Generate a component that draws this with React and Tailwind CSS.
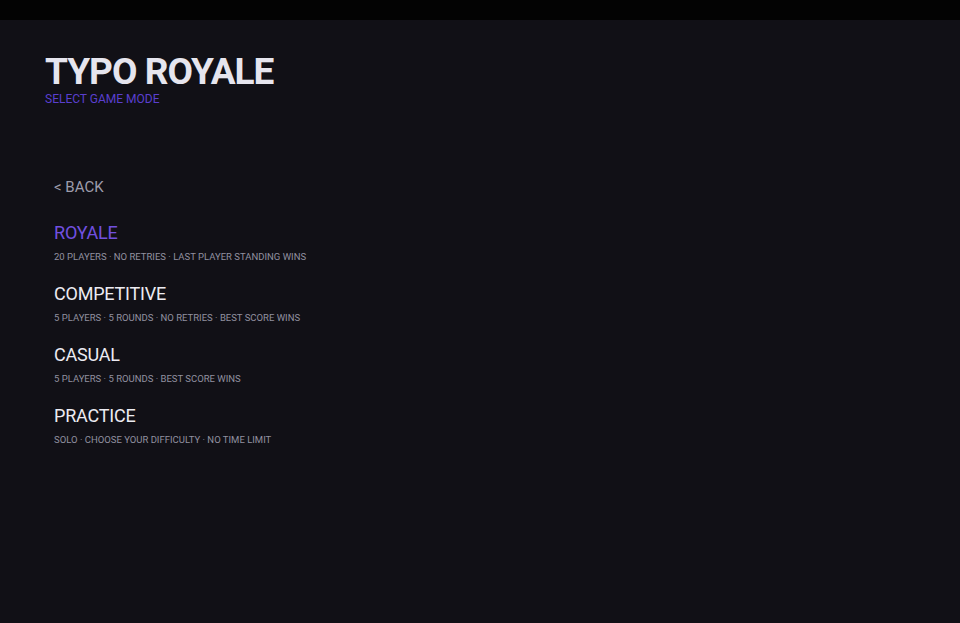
import React from "react";

const modes = [
  { name: "ROYALE", desc: "20 PLAYERS · NO RETRIES · LAST PLAYER STANDING WINS", active: true },
  { name: "COMPETITIVE", desc: "5 PLAYERS · 5 ROUNDS · NO RETRIES · BEST SCORE WINS" },
  { name: "CASUAL", desc: "5 PLAYERS · 5 ROUNDS · BEST SCORE WINS" },
  { name: "PRACTICE", desc: "SOLO · CHOOSE YOUR DIFFICULTY · NO TIME LIMIT" },
];

const App = () => {
  return (
    <div
      className="w-full h-[623px] bg-[#111016] flex flex-col"
      style={{ fontFamily: "Roboto, 'Liberation Sans', sans-serif" }}
    >
      <div className="w-full h-[20px] bg-[#030303]" />
      <div className="pl-[45px] pt-[31px]">
        <h1 className="text-[37px] leading-[42px] font-bold text-[#e6e5ee] tracking-[-1px]">
          TYPO ROYALE
        </h1>
        <p className="text-[12px] leading-[12px] text-[#5a3fcf]">SELECT GAME MODE</p>
      </div>
      <div className="pl-[54px] pt-[73px]">
        <div className="text-[15px] leading-[18px] text-[#9d9cab] cursor-pointer">&lt; BACK</div>
        <div className="mt-[26px] flex flex-col gap-[20px]">
          {modes.map((m) => (
            <div key={m.name} className="cursor-pointer">
              <div
                className={
                  m.active
                    ? "text-[18px] leading-[22px] text-[#7150e0] tracking-[-0.2px]"
                    : "text-[18px] leading-[22px] text-[#ecebf2] tracking-[-0.2px]"
                }
              >
                {m.name}
              </div>
              <div className="text-[9.5px] leading-[12px] mt-[7px] text-[#9190a0]">{m.desc}</div>
            </div>
          ))}
        </div>
      </div>
    </div>
  );
};

export default App;
